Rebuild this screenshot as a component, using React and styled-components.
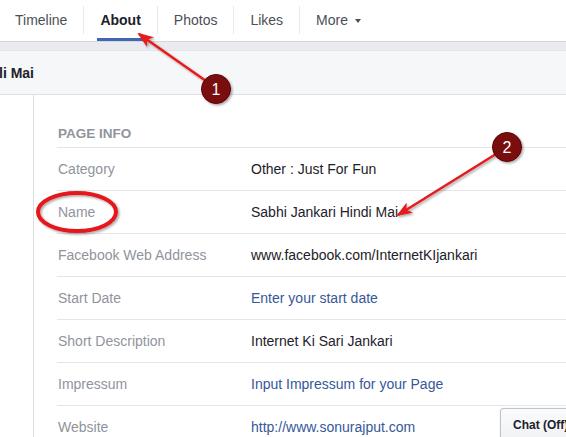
import React from "react";
import styled, { createGlobalStyle } from "styled-components";

const GlobalStyle = createGlobalStyle`
  html, body {
    margin: 0;
    padding: 0;
    background: #fff;
    font-family: "Liberation Sans", Arial, sans-serif;
    overflow: hidden;
  }
`;

const TABS = [
  { label: "Timeline" },
  { label: "About", active: true },
  { label: "Photos" },
  { label: "Likes" },
  { label: "More", caret: true },
];

const ROWS = [
  { label: "Category", value: "Other : Just For Fun" },
  { label: "Name", value: "Sabhi Jankari Hindi Mai" },
  { label: "Facebook Web Address", value: "www.facebook.com/InternetKIjankari" },
  { label: "Start Date", value: "Enter your start date", link: true },
  { label: "Short Description", value: "Internet Ki Sari Jankari" },
  { label: "Impressum", value: "Input Impressum for your Page", link: true },
  { label: "Website", value: "http://www.sonurajput.com", link: true },
];

export default function App() {
  return (
    <Page>
      <GlobalStyle />
      <TabBar>
        {TABS.map((tab, i) => (
          <Tab key={tab.label} first={i === 0} active={tab.active}>
            {tab.label}
            {tab.caret && <Caret />}
          </Tab>
        ))}
      </TabBar>
      <Band />
      <PageHeader>li Mai</PageHeader>
      <Body>
        <Sidebar />
        <Main>
          <SectionTitle>PAGE INFO</SectionTitle>
          {ROWS.map((row) => (
            <Row key={row.label}>
              <Label>{row.label}</Label>
              <Value link={row.link}>{row.value}</Value>
            </Row>
          ))}
        </Main>
      </Body>
      <ChatButton>Chat (Off)</ChatButton>
      <Annotations width="566" height="437" viewBox="0 0 566 437">
        <defs>
          <marker
            id="head"
            viewBox="0 0 16 12"
            refX="14"
            refY="6"
            markerWidth="16"
            markerHeight="12"
            markerUnits="userSpaceOnUse"
            orient="auto"
          >
            <path d="M0 0 L16 6 L0 12 L4 6 Z" fill="#e51c1c" />
          </marker>
          <filter id="shadow" x="-20%" y="-20%" width="140%" height="140%">
            <feDropShadow dx="1.5" dy="1.5" stdDeviation="1.2" floodColor="#000" floodOpacity="0.35" />
          </filter>
        </defs>
        <g filter="url(#shadow)">
          <line x1="206" y1="81" x2="139" y2="34" stroke="#e51c1c" strokeWidth="2.5" markerEnd="url(#head)" />
          <line x1="496" y1="154" x2="398" y2="215" stroke="#e51c1c" strokeWidth="2.5" markerEnd="url(#head)" />
          <ellipse cx="77" cy="212" rx="39" ry="19" fill="none" stroke="#e5141a" strokeWidth="4" />
          <circle cx="216" cy="89" r="14.5" fill="#7a0909" stroke="#5a0505" strokeWidth="1" />
          <circle cx="507" cy="147" r="14.5" fill="#7a0909" stroke="#5a0505" strokeWidth="1" />
        </g>
        <Num x="216" y="95">1</Num>
        <Num x="507" y="153">2</Num>
      </Annotations>
    </Page>
  );
}

const Page = styled.div`
  position: relative;
  width: 566px;
  height: 437px;
  overflow: hidden;
  background: #fff;
`;

const TabBar = styled.div`
  display: flex;
  align-items: flex-start;
  height: 42px;
  background: #fff;
  padding-top: 6px;
  box-sizing: border-box;
  border-bottom: 1px solid #d3d6db;
`;

const Tab = styled.div`
  position: relative;
  display: flex;
  align-items: center;
  height: 28px;
  padding: 0 16px;
  margin-left: ${(p) => (p.first ? "-1px" : "0")};
  border-left: ${(p) => (p.first ? "none" : "1px solid #e9eaed")};
  font-size: 14px;
  color: ${(p) => (p.active ? "#1d2129" : "#4b4f56")};
  font-weight: ${(p) => (p.active ? "bold" : "normal")};

  &::after {
    content: "";
    display: ${(p) => (p.active ? "block" : "none")};
    position: absolute;
    left: 13px;
    right: 12px;
    bottom: -7px;
    height: 3px;
    background: #4267b2;
  }
`;

const Caret = styled.span`
  display: inline-block;
  margin-left: 7px;
  margin-top: 1px;
  width: 0;
  height: 0;
  border-left: 3px solid transparent;
  border-right: 3px solid transparent;
  border-top: 4px solid #4b4f56;
`;

const Band = styled.div`
  height: 8px;
  background: #e9ebee;
`;

const PageHeader = styled.div`
  display: flex;
  align-items: center;
  background: #f6f7f9;
  border-bottom: 1px solid #dddfe2;
  border-top: 1px solid #e4e6e9;
  box-sizing: border-box;
  height: 45px;
  font-size: 14px;
  font-weight: bold;
  color: #1d2129;
  margin-left: -1px;
`;

const Body = styled.div`
  display: flex;
  height: 400px;
`;

const Sidebar = styled.div`
  width: 33px;
  flex: none;
  border-right: 1px solid #dddfe2;
`;

const Main = styled.div`
  flex: 1;
  margin-left: 23px;
`;

const SectionTitle = styled.div`
  padding: 31px 0 0 1px;
  height: 21px;
  font-size: 13.5px;
  font-weight: bold;
  color: #90949c;
  line-height: 16px;
`;

const Row = styled.div`
  display: grid;
  grid-template-columns: 193px 1fr;
  align-items: center;
  height: 42px;
  border-top: 1px solid #e5e5e5;
  font-size: 14px;
  padding-left: 1px;
`;

const Label = styled.div`
  color: #90949c;
`;

const Value = styled.div`
  color: ${(p) => (p.link ? "#365899" : "#1d2129")};
  white-space: nowrap;
`;

const ChatButton = styled.div`
  position: absolute;
  left: 500px;
  top: 408px;
  width: 90px;
  height: 40px;
  box-sizing: border-box;
  padding: 9px 0 0 12px;
  background: linear-gradient(#fafbfc, #eef0f3);
  border: 1px solid #bec2c9;
  border-radius: 3px 0 0 0;
  font-size: 12px;
  font-weight: bold;
  color: #1d2129;
  box-shadow: 0 0 2px rgba(0, 0, 0, 0.1);
`;

const Annotations = styled.svg`
  position: absolute;
  left: 0;
  top: 0;
  pointer-events: none;
`;

const Num = styled.text`
  fill: #fff;
  font-family: "Liberation Sans", Arial, sans-serif;
  font-size: 16px;
  text-anchor: middle;
`;
